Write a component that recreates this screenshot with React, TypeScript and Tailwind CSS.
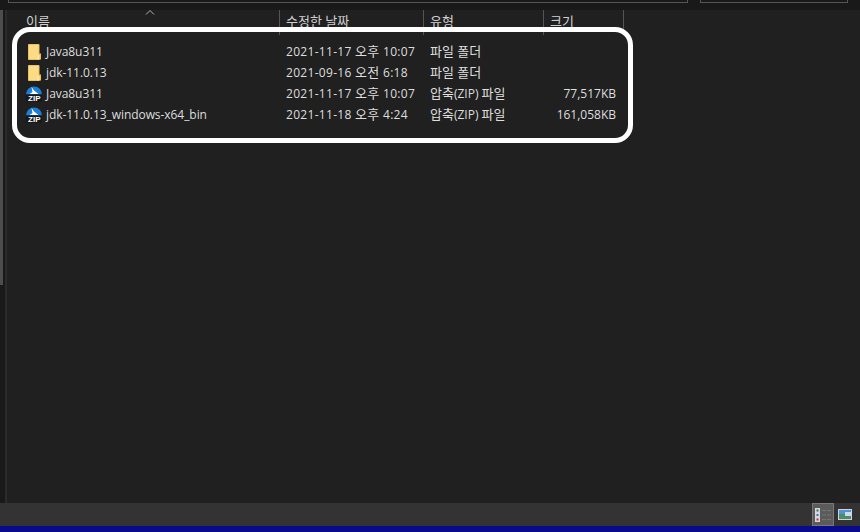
const font = { fontFamily: '"Open Sans", "Noto Sans CJK KR", sans-serif' };

interface FileRow {
  name: string;
  date: string;
  type: string;
  size: string;
  zip: boolean;
}

const files: FileRow[] = [
  { name: "Java8u311", date: "2021-11-17 오후 10:07", type: "파일 폴더", size: "", zip: false },
  { name: "jdk-11.0.13", date: "2021-09-16 오전 6:18", type: "파일 폴더", size: "", zip: false },
  { name: "Java8u311", date: "2021-11-17 오후 10:07", type: "압축(ZIP) 파일", size: "77,517KB", zip: true },
  { name: "jdk-11.0.13_windows-x64_bin", date: "2021-11-18 오후 4:24", type: "압축(ZIP) 파일", size: "161,058KB", zip: true },
];

// Korean glyphs sit wider than the latin ones in the picture
function Mixed({ text }: { text: string }) {
  return (
    <>
      {text.split(/([가-힣]+(?: [가-힣]+)*)/).map((part, i) =>
        /[가-힣]/.test(part) ? (
          <span key={i} className="text-[13px]">
            {part}
          </span>
        ) : (
          <span key={i}>{part}</span>
        ),
      )}
    </>
  );
}

function FolderIcon() {
  return (
    <svg width="16" height="16" viewBox="0 0 16 16" className="shrink-0">
      <path d="M2.5 0.5h10.5v15h-10.5z" fill="#fbdc85" stroke="#e8c266" strokeWidth="1" />
      <path d="M13 9.5h2v6h-2z" fill="#f3c14f" />
      <path d="M11.5 11h2v4.5h-2z" fill="#fde9ad" />
    </svg>
  );
}

function ZipIcon() {
  return (
    <svg width="16" height="16" viewBox="0 0 16 16" className="shrink-0">
      <path d="M0 8.5a8 8 0 0 1 16 0z" fill="#1c7fd6" />
      <path d="M5.5 1l2.5 3.5 4.5 3.5H3.5l3-2z" fill="#ffffff" />
      <path d="M0 8.5h16v5a2.5 2.5 0 0 1-2.5 2.5h-11a2.5 2.5 0 0 1-2.5-2.5z" fill="#16181a" />
      <text x="2" y="15.2" textLength="12.5" lengthAdjust="spacingAndGlyphs" fontSize="7.5" fontWeight="700" fill="#ffffff" fontFamily="Liberation Sans, sans-serif">
        ZIP
      </text>
    </svg>
  );
}

function ListViewIcon() {
  return (
    <svg width="16" height="14" viewBox="0 0 16 14">
      <rect x="0" y="0" width="5" height="14" fill="#d8d8d8" />
      <rect x="1.5" y="1.5" width="2" height="2" fill="#2f7f4f" />
      <rect x="1.5" y="6" width="2" height="2" fill="#3f6fd0" />
      <rect x="1.5" y="10.5" width="2" height="2" fill="#c0303a" />
      <path d="M7 2.5h4M12 2.5h4M7 7h4M12 7h4M7 11.5h4M12 11.5h4" stroke="#757575" strokeWidth="1" />
    </svg>
  );
}

function PreviewIcon() {
  return (
    <svg width="14" height="11" viewBox="0 0 14 11">
      <rect x="0" y="0" width="14" height="11" fill="#d4d4d4" />
      <rect x="1" y="1" width="12" height="4" fill="#4f93d6" />
      <rect x="1" y="5" width="12" height="5" fill="#4f8a6a" />
      <rect x="7" y="3" width="6" height="4" fill="#c8dcec" />
    </svg>
  );
}

export default function App() {
  return (
    <div className="relative flex h-[532px] w-[860px] flex-col overflow-hidden bg-[#202020] text-xs text-[#dedede]" style={font}>
      {/* search and address boxes, cut off at the top */}
      <div className="flex h-[10px] shrink-0 items-start bg-[#191919]">
        <div className="ml-[8px] h-[3px] w-[680px] border-r border-b border-l border-[#555555]" />
        <div className="ml-[12px] h-[3px] w-[148px] border-r border-b border-l border-[#555555]" />
      </div>

      <div className="flex min-h-0 flex-1">
        {/* sidebar edge */}
        <div className="flex w-[7px] shrink-0 bg-[#191919]">
          <div className="h-[275px] w-[3px] bg-[#4d4d4d]" />
          <div className="ml-auto w-[2px] bg-[#2b2b2b]" />
        </div>

        <div className="min-w-0 flex-1">
          <div className="relative flex h-[25px] text-[13px] leading-[18px] text-[#d0d0d0]">
            <div className="w-[273px] border-r border-[#555555] pl-[19px] pt-[2px]">이름</div>
            <div className="w-[144px] border-r border-[#555555] pl-[6px] pt-[2px]">수정한 날짜</div>
            <div className="w-[120px] border-r border-[#555555] pl-[6px] pt-[2px]">유형</div>
            <div className="w-[80px] border-r border-[#555555] pl-[6px] pt-[2px]">크기</div>
            <svg width="10" height="6" viewBox="0 0 10 6" className="absolute top-0 left-[138px]">
              <path d="M1 4.5l4-4 4 4" fill="none" stroke="#b0b0b0" />
            </svg>
          </div>

          <ul className="pt-[6px]">
            {files.map((f) => (
              <li key={f.name + f.type} className="flex h-[21px] items-center">
                <div className="flex w-[273px] items-center gap-[4px] pl-[19px]">
                  {f.zip ? <ZipIcon /> : <FolderIcon />}
                  <span className="whitespace-nowrap tracking-[-0.06px]">{f.name}</span>
                </div>
                <div className="w-[144px] whitespace-nowrap pl-[6px] tracking-[0.3px]">
                  <Mixed text={f.date} />
                </div>
                <div className="w-[120px] whitespace-nowrap pl-[6px]">
                  <Mixed text={f.type} />
                </div>
                <div className="w-[72px] whitespace-nowrap text-right">{f.size}</div>
              </li>
            ))}
          </ul>
        </div>
      </div>

      {/* status bar */}
      <div className="flex h-[23px] shrink-0 items-center justify-end bg-[#333333] pr-[4px]">
        <div className="flex h-[23px] w-[22px] items-center justify-center border border-[#777777] bg-[#5b5b5b]">
          <ListViewIcon />
        </div>
        <div className="flex h-[23px] w-[22px] items-center justify-center">
          <PreviewIcon />
        </div>
      </div>
      <div className="h-[6px] shrink-0 bg-[#0a0a8c]" />

      {/* white marker ring drawn over the list */}
      <div className="absolute top-[27px] left-[12px] h-[116px] w-[621px] rounded-[18px] border-[5px] border-white" />
    </div>
  );
}
